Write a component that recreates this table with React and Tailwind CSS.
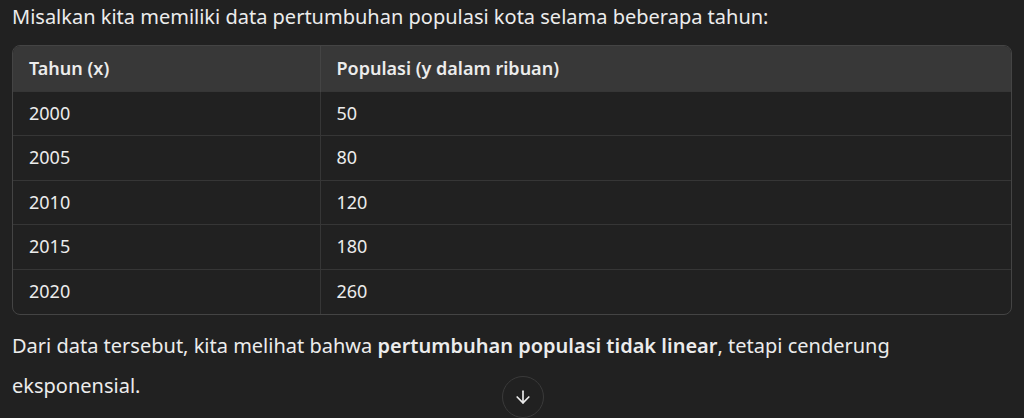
import React from 'react';
import { ArrowDown } from 'lucide-react';

const rows = [
  ['2000', '50'],
  ['2005', '80'],
  ['2010', '120'],
  ['2015', '180'],
  ['2020', '260'],
];

const App = () => {
  return (
    <div
      className="relative h-[418px] w-full overflow-hidden bg-[#212121] text-[#ececec]"
      style={{ fontFamily: '"Noto Sans", "Open Sans", sans-serif' }}
    >
      <p className="px-3 pt-[1px] text-[20px] leading-[32px]">
        Misalkan kita memiliki data pertumbuhan populasi kota selama beberapa tahun:
      </p>

      <div className="mx-3 mt-[12px] overflow-hidden rounded-lg border border-[#444444]">
        <table className="w-full border-collapse text-[18px]">
          <thead>
            <tr className="h-[45px] bg-[#383838] text-left">
              <th className="w-[307px] border-r border-[#444444] px-4 font-semibold">Tahun (x)</th>
              <th className="px-4 font-semibold">Populasi (y dalam ribuan)</th>
            </tr>
          </thead>
          <tbody>
            {rows.map(([year, pop]) => (
              <tr key={year} className="h-[44.5px] border-t border-[#363636]">
                <td className="border-r border-[#363636] px-4">{year}</td>
                <td className="px-4">{pop}</td>
              </tr>
            ))}
          </tbody>
        </table>
      </div>

      <p className="mt-[11px] px-3 text-[20px] leading-[40px]">
        Dari data tersebut, kita melihat bahwa{' '}
        <strong className="font-semibold">pertumbuhan populasi tidak linear</strong>, tetapi cenderung
        eksponensial.
      </p>

      <button className="absolute left-[502px] top-[376px] flex h-[42px] w-[42px] items-center justify-center rounded-full border border-[#3a3a3a] bg-[#212121] text-[#ececec]">
        <ArrowDown className="h-5 w-5" strokeWidth={2} />
      </button>
    </div>
  );
};

export default App;
